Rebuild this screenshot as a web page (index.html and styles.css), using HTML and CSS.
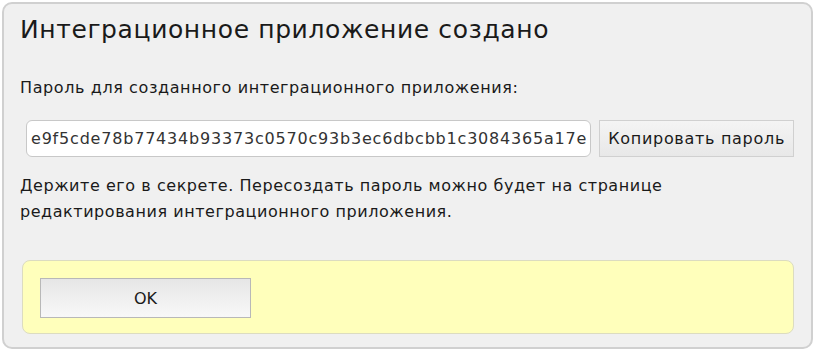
FILE: index.html
```html
<!DOCTYPE html>
<html lang="ru">
<head>
  <meta charset="UTF-8" />
  <title>Интеграционное приложение создано</title>
  <link rel="stylesheet" href="styles.css">
</head>
<body>
  <div class="dialog">
    <h1 class="dialog-title">Интеграционное приложение создано</h1>
    <p class="label">Пароль для созданного интеграционного приложения:</p>
    <div class="password-row">
      <input class="password" type="text" value="e9f5cde78b77434b93373c0570c93b3ec6dbcbb1c3084365a17ec0d2" readonly>
      <button class="copy-btn" type="button">Копировать пароль</button>
    </div>
    <p class="note">Держите его в секрете. Пересоздать пароль можно будет на странице<br>редактирования интеграционного приложения.</p>
    <div class="actions">
      <button class="ok-btn" type="button">OK</button>
    </div>
  </div>
</body>
</html>
```

FILE: styles.css
```css
body {
  margin: 0;
  padding: 2px;
  background: #fff;
  font-family: "DejaVu Sans", "Noto Sans", sans-serif;
  color: #1a1a1a;
}
.dialog {
  box-sizing: border-box;
  width: 811px;
  height: 347px;
  background: #f0f0f0;
  border: 2px solid #d0d0d0;
  border-radius: 10px;
  padding: 8px 17px 0 16px;
}
.dialog-title {
  margin: 0;
  font-size: 25px;
  font-weight: normal;
  letter-spacing: 0.6px;
  line-height: 36px;
}
.label {
  margin: 30px 0 0;
  font-size: 16px;
  letter-spacing: 0.6px;
  line-height: 20px;
}
.password-row {
  display: flex;
  gap: 8px;
  margin-top: 22px;
  padding-left: 6px;
}
.password {
  box-sizing: border-box;
  width: 566px;
  height: 37px;
  padding: 0 4px;
  border: 1px solid #c8c8c8;
  border-radius: 6px;
  background: #fff;
  font-family: inherit;
  font-size: 16px;
  letter-spacing: 0.8px;
  color: #333;
}
.copy-btn {
  box-sizing: border-box;
  width: 195px;
  height: 37px;
  padding: 0;
  border: 1px solid #d0d0d0;
  background: linear-gradient(#f4f4f4, #e8e8e8);
  font-family: inherit;
  font-size: 16px;
  letter-spacing: 0.7px;
  color: #1a1a1a;
}
.note {
  margin: 16px 0 0;
  font-size: 16px;
  letter-spacing: 0.55px;
  line-height: 26px;
}
.actions {
  box-sizing: border-box;
  height: 74px;
  margin-top: 35px;
  margin-left: 2px;
  background: #ffffbb;
  border: 1px solid #dcdcc0;
  border-radius: 8px;
  padding: 17px 17px;
}
.ok-btn {
  box-sizing: border-box;
  width: 211px;
  height: 40px;
  border: 1px solid #b8b8b8;
  background: linear-gradient(#e6e6e6, #f8f8f8);
  font-family: inherit;
  font-size: 16px;
  color: #1a1a1a;
}
```
